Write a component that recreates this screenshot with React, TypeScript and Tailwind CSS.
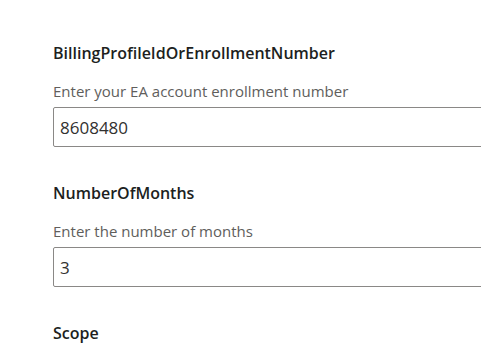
import { useState } from "react";

interface FieldProps {
  label: string;
  description: string;
  value: string;
}

function Field({ label, description, value }: FieldProps) {
  const [text, setText] = useState(value);
  return (
    <div className="flex flex-col mb-[36px]">
      <label className="text-[16px] leading-[20px] font-semibold text-[#201f1e]">
        {label}
      </label>
      <p className="mt-[18px] text-[15px] leading-[20px] text-[#605e5c]">
        {description}
      </p>
      <input
        className="mt-[6px] h-[40px] w-[440px] shrink-0 rounded-[2px] border border-[#8a8886] bg-white px-[6px] text-[17px] text-[#323130] outline-none"
        value={text}
        onChange={(e) => setText(e.target.value)}
      />
    </div>
  );
}

export default function App() {
  return (
    <div
      className="h-screen overflow-hidden bg-white pl-[53px] pt-[43px]"
      style={{ fontFamily: '"Open Sans", "Noto Sans", sans-serif' }}
    >
      <Field
        label="BillingProfileIdOrEnrollmentNumber"
        description="Enter your EA account enrollment number"
        value="8608480"
      />
      <Field
        label="NumberOfMonths"
        description="Enter the number of months"
        value="3"
      />
      <Field
        label="Scope"
        description="Enter the scope as billing account or enrollment"
        value=""
      />
    </div>
  );
}
